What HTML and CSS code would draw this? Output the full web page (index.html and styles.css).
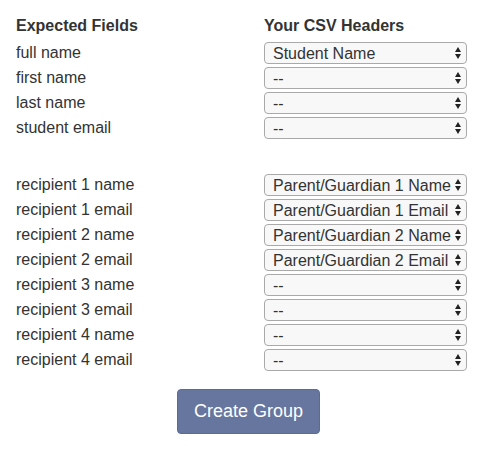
FILE: index.html
```html
<!DOCTYPE html>
<html>
<head>
<meta charset="utf-8">
<link rel="stylesheet" href="styles.css">
</head>
<body>
<div class="page">
  <div class="map">
    <div class="head">Expected Fields</div>
    <div class="head">Your CSV Headers</div>

    <div class="label">full name</div>
    <div class="sel"><select><option>Student Name</option></select><span class="arr"></span></div>
    <div class="label">first name</div>
    <div class="sel"><select><option>--</option></select><span class="arr"></span></div>
    <div class="label">last name</div>
    <div class="sel"><select><option>--</option></select><span class="arr"></span></div>
    <div class="label">student email</div>
    <div class="sel"><select><option>--</option></select><span class="arr"></span></div>

    <div class="spacer"></div>

    <div class="label">recipient 1 name</div>
    <div class="sel"><select><option>Parent/Guardian 1 Name</option></select><span class="arr"></span></div>
    <div class="label">recipient 1 email</div>
    <div class="sel"><select><option>Parent/Guardian 1 Email</option></select><span class="arr"></span></div>
    <div class="label">recipient 2 name</div>
    <div class="sel"><select><option>Parent/Guardian 2 Name</option></select><span class="arr"></span></div>
    <div class="label">recipient 2 email</div>
    <div class="sel"><select><option>Parent/Guardian 2 Email</option></select><span class="arr"></span></div>
    <div class="label">recipient 3 name</div>
    <div class="sel"><select><option>--</option></select><span class="arr"></span></div>
    <div class="label">recipient 3 email</div>
    <div class="sel"><select><option>--</option></select><span class="arr"></span></div>
    <div class="label">recipient 4 name</div>
    <div class="sel"><select><option>--</option></select><span class="arr"></span></div>
    <div class="label">recipient 4 email</div>
    <div class="sel"><select><option>--</option></select><span class="arr"></span></div>
  </div>
  <div class="actions">
    <button class="btn">Create Group</button>
  </div>
</div>
</body>
</html>
```

FILE: styles.css
```css
html, body {
  margin: 0;
  padding: 0;
  background: #fff;
}
body {
  font-family: "Liberation Sans", Arial, Helvetica, sans-serif;
  color: #333;
  font-size: 16px;
}
.page {
  width: 497px;
  padding-top: 16px;
}
.map {
  display: grid;
  grid-template-columns: 248px 203px;
  padding-left: 16px;
  row-gap: 3px;
  align-items: center;
}
.head {
  font-weight: bold;
  font-size: 16px;
  line-height: 20px;
  margin-bottom: 3px;
}
.label {
  line-height: 22px;
}
.spacer {
  grid-column: 1 / span 2;
  height: 29px;
}
.sel {
  position: relative;
  height: 22px;
}
.sel select {
  appearance: none;
  -webkit-appearance: none;
  width: 203px;
  height: 22px;
  box-sizing: border-box;
  margin: 0;
  border: 1px solid #a9a9a9;
  border-radius: 4px;
  background: #f8f8f8;
  font-family: "Liberation Sans", Arial, Helvetica, sans-serif;
  font-size: 16px;
  color: #333;
  padding: 0 14px 0 8px;
  outline: none;
}
.arr {
  position: absolute;
  right: 6px;
  top: 5px;
  width: 0;
  height: 0;
}
.arr::before, .arr::after {
  content: "";
  position: absolute;
  right: 0;
  border-left: 3.5px solid transparent;
  border-right: 3.5px solid transparent;
}
.arr::before {
  top: 0;
  border-bottom: 5px solid #222;
}
.arr::after {
  top: 7px;
  border-top: 5px solid #222;
}
.actions {
  display: flex;
  justify-content: center;
  padding-top: 18px;
}
.btn {
  width: 143px;
  height: 45px;
  border: 1px solid #5d6b93;
  border-radius: 4px;
  background: #67769e;
  color: #fff;
  font-family: "Liberation Sans", Arial, Helvetica, sans-serif;
  font-size: 18px;
  padding: 0;
}
```
